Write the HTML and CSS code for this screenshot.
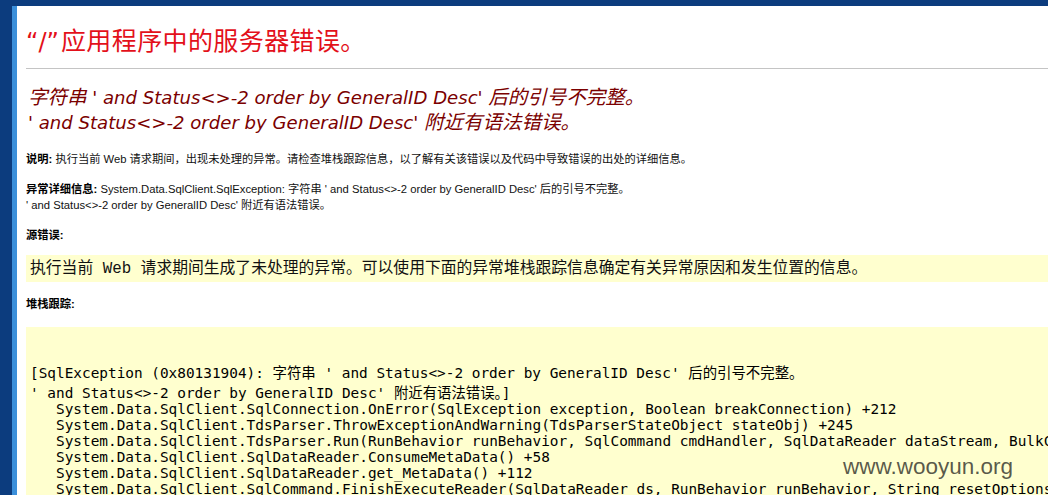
FILE: index.html
```html
<!DOCTYPE html>
<html lang="zh-CN">
<head>
<meta charset="utf-8">
<title>“/”应用程序中的服务器错误。</title>
<link rel="stylesheet" href="styles.css">
</head>
<body>
<div class="topbar"></div>
<div class="frame">
  <div class="rail-dark"></div>
  <div class="rail-light"></div>
  <main class="page">
    <h1 class="title"><span class="quote">“/”</span>应用程序中的服务器错误。</h1>
    <hr class="rule">
    <h2 class="message"><span class="cjk">字符串</span> ' and Status&lt;&gt;-2 order by GeneralID Desc' <span class="cjk">后的引号不完整。</span><br>' and Status&lt;&gt;-2 order by GeneralID Desc' <span class="cjk">附近有语法错误。</span></h2>

    <p class="info first"><b>说明:</b> 执行当前 Web 请求期间，出现未处理的异常。请检查堆栈跟踪信息，以了解有关该错误以及代码中导致错误的出处的详细信息。</p>

    <p class="info"><b>异常详细信息:</b> System.Data.SqlClient.SqlException: 字符串 ' and Status&lt;&gt;-2 order by GeneralID Desc' 后的引号不完整。<br>' and Status&lt;&gt;-2 order by GeneralID Desc' 附近有语法错误。</p>

    <p class="info"><b>源错误:</b></p>

    <div class="box source">执行当前 Web 请求期间生成了未处理的异常。可以使用下面的异常堆栈跟踪信息确定有关异常原因和发生位置的信息。</div>

    <p class="info"><b>堆栈跟踪:</b></p>

    <div class="box stack">
<pre class="trace"><span class="l1">[SqlException (0x80131904): 字符串 ' and Status&lt;&gt;-2 order by GeneralID Desc' 后的引号不完整。</span>' and Status&lt;&gt;-2 order by GeneralID Desc' 附近有语法错误。]
   System.Data.SqlClient.SqlConnection.OnError(SqlException exception, Boolean breakConnection) +212
   System.Data.SqlClient.TdsParser.ThrowExceptionAndWarning(TdsParserStateObject stateObj) +245
   System.Data.SqlClient.TdsParser.Run(RunBehavior runBehavior, SqlCommand cmdHandler, SqlDataReader dataStream, BulkCopySimpleResultSet bulkCopyHandler, TdsParserStateObject stateObj) +2811
   System.Data.SqlClient.SqlDataReader.ConsumeMetaData() +58
   System.Data.SqlClient.SqlDataReader.get_MetaData() +112
   System.Data.SqlClient.SqlCommand.FinishExecuteReader(SqlDataReader ds, RunBehavior runBehavior, String resetOptionsString) +6281668</pre>
    </div>
  </main>
</div>
<div class="watermark">www.wooyun.org</div>
</body>
</html>
```

FILE: styles.css
```css
html, body {
  margin: 0;
  padding: 0;
  height: 100%;
  overflow: hidden;
  background: #ffffff;
}

body {
  display: flex;
  flex-direction: column;
  font-family: "Liberation Sans", "Noto Sans CJK SC", sans-serif;
  color: #000;
  position: relative;
}

.topbar {
  height: 6px;
  background: #0c3c7e;
  flex: none;
}

.frame {
  flex: 1;
  display: flex;
  min-height: 0;
}

.rail-dark {
  width: 12px;
  background: #0c3c7e;
  flex: none;
}

.rail-light {
  width: 5px;
  background: #3b8fda;
  flex: none;
}

.page {
  flex: 1;
  padding-left: 9px;
  min-width: 0;
  overflow: hidden;
}

.title {
  margin: 18px 0 0 0;
  font-family: "Noto Sans CJK SC", sans-serif;
  font-weight: normal;
  font-size: 25px;
  line-height: 31px;
  color: #e3101a;
  letter-spacing: 0.4px;
}

.title .quote {
  font-family: "DejaVu Sans", sans-serif;
  font-size: 24px;
  letter-spacing: 0;
  margin-right: 2px;
}

.rule {
  margin: 10px 0 0 0;
  border: 0;
  height: 1px;
  background: #c4c4c4;
}

.message {
  margin: 16px 0 0 2px;
  font-family: "DejaVu Sans", "Noto Sans CJK SC", sans-serif;
  font-style: italic;
  font-weight: normal;
  font-size: 18.1px;
  line-height: 25px;
  color: #7b0000;
}

.message .cjk {
  font-family: "Noto Sans CJK SC", sans-serif;
  font-size: 19.5px;
  line-height: 20px;
}

.info {
  margin: 14px 0 0 0;
  font-size: 11.25px;
  line-height: 16px;
  color: #111;
}

.info.first {
  margin-top: 16px;
}

.info b {
  font-weight: bold;
  color: #000;
}

.box {
  background: #ffffcf;
}

.source {
  margin-top: 12px;
  height: 27px;
  padding-left: 4px;
  font-family: "Liberation Mono", "Noto Sans CJK SC", monospace;
  font-size: 15.8px;
  line-height: 28px;
  color: #111;
  white-space: nowrap;
  overflow: hidden;
}

.stack {
  margin-top: 15px;
  padding: 38px 0 20px 4px;
}

.trace {
  margin: 0;
  font-family: "DejaVu Sans Mono", "Noto Sans CJK SC", monospace;
  font-size: 14.4px;
  line-height: 16px;
  color: #000;
  white-space: pre;
  overflow: hidden;
}

.trace .l1 {
  display: block;
  margin-bottom: 4px;
}

.watermark {
  position: absolute;
  left: 843px;
  top: 453px;
  font-family: "Liberation Sans", sans-serif;
  font-size: 22.5px;
  line-height: 28px;
  color: rgba(60, 60, 50, 0.85);
}
```
